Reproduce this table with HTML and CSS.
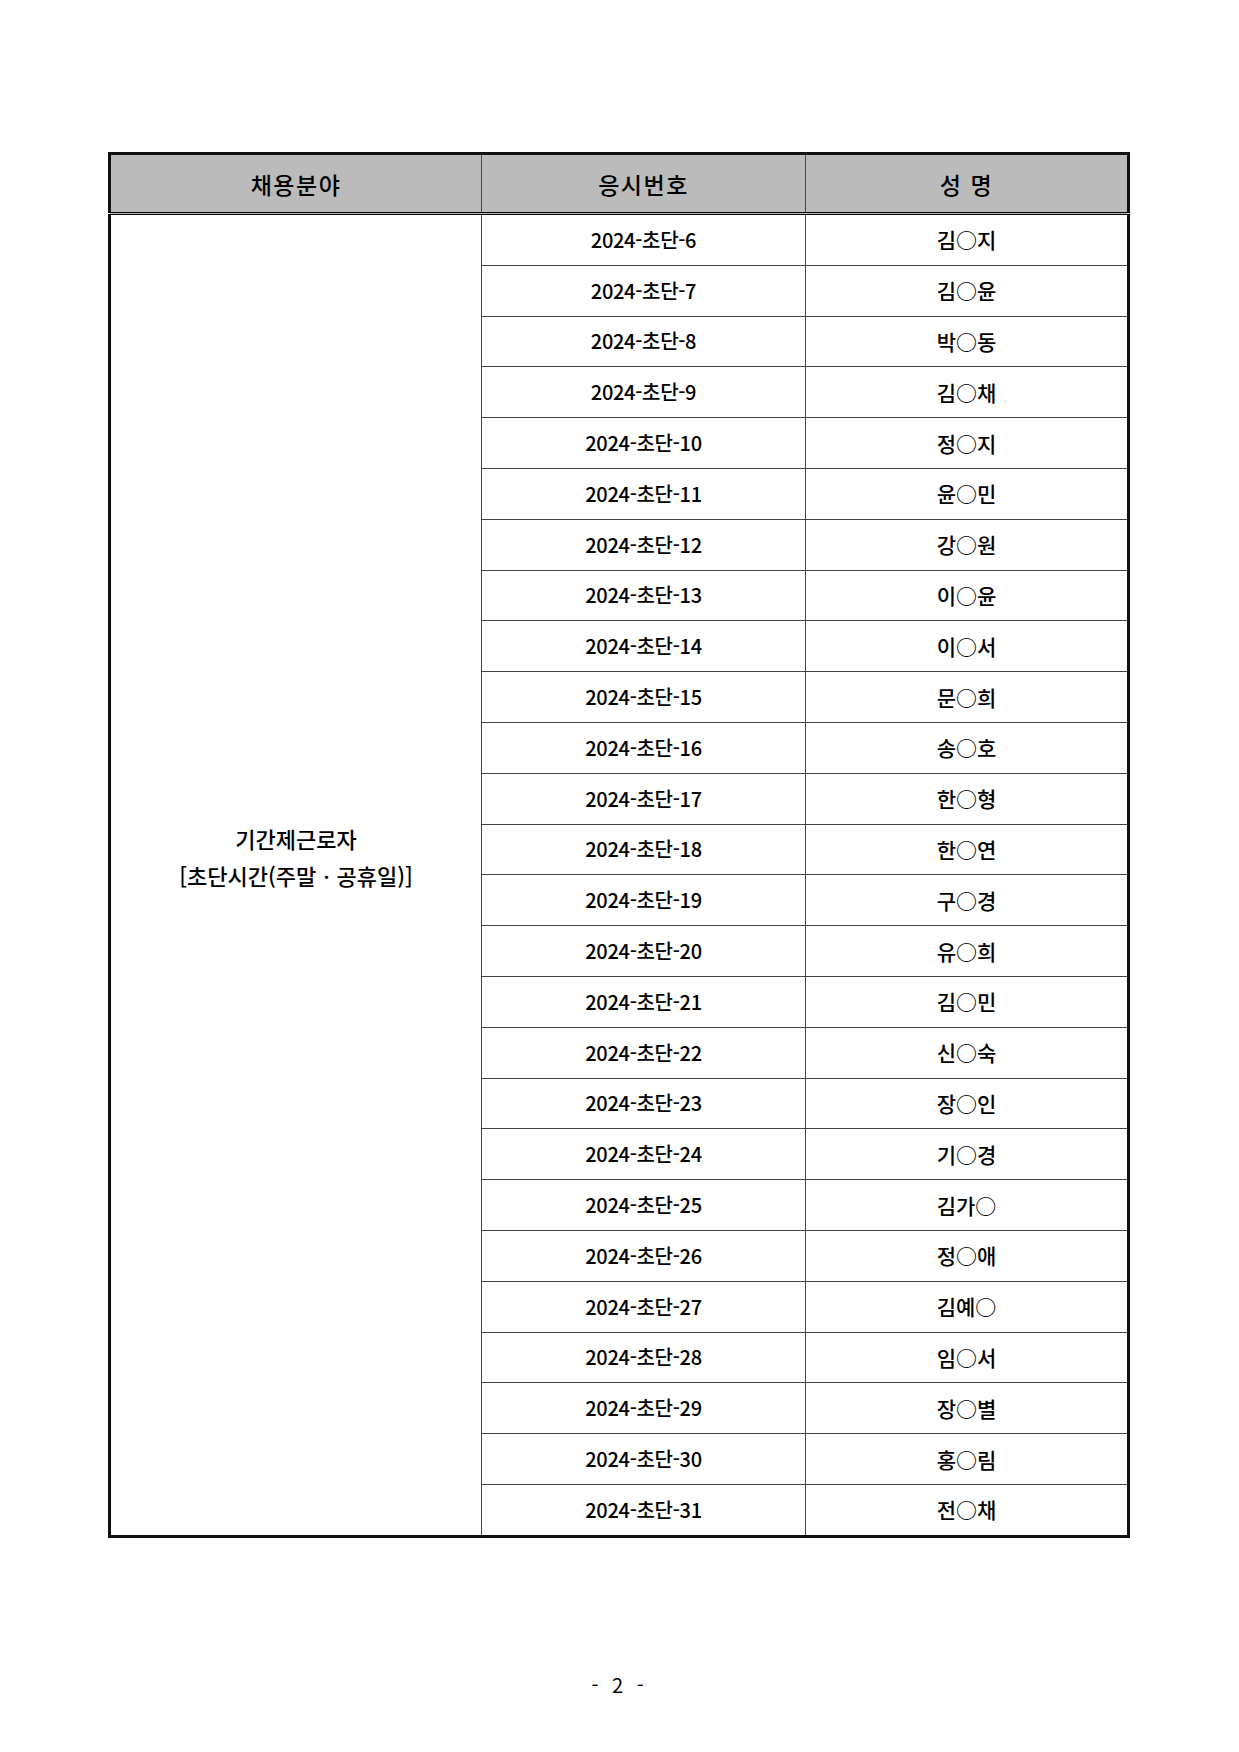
FILE: index.html
```html
<!DOCTYPE html>
<html lang="ko">
<head>
<meta charset="utf-8">
<title>합격자 명단</title>
<link rel="stylesheet" href="styles.css">
</head>
<body>
<div class="page">
<table class="roster">
  <colgroup>
    <col class="c1"><col class="c2"><col class="c3">
  </colgroup>
  <thead>
    <tr><th>채용분야</th><th>응시번호</th><th>성&nbsp;명</th></tr>
  </thead>
  <tbody>
    <tr><td class="field" rowspan="26"><div class="field-text">기간제근로자<br>[초단시간(주말ㆍ공휴일)]</div></td><td class="num">2024-초단-6</td><td>김○지</td></tr>
    <tr><td class="num">2024-초단-7</td><td>김○윤</td></tr>
    <tr><td class="num">2024-초단-8</td><td>박○동</td></tr>
    <tr><td class="num">2024-초단-9</td><td>김○채</td></tr>
    <tr><td class="num">2024-초단-10</td><td>정○지</td></tr>
    <tr><td class="num">2024-초단-11</td><td>윤○민</td></tr>
    <tr><td class="num">2024-초단-12</td><td>강○원</td></tr>
    <tr><td class="num">2024-초단-13</td><td>이○윤</td></tr>
    <tr><td class="num">2024-초단-14</td><td>이○서</td></tr>
    <tr><td class="num">2024-초단-15</td><td>문○희</td></tr>
    <tr><td class="num">2024-초단-16</td><td>송○호</td></tr>
    <tr><td class="num">2024-초단-17</td><td>한○형</td></tr>
    <tr><td class="num">2024-초단-18</td><td>한○연</td></tr>
    <tr><td class="num">2024-초단-19</td><td>구○경</td></tr>
    <tr><td class="num">2024-초단-20</td><td>유○희</td></tr>
    <tr><td class="num">2024-초단-21</td><td>김○민</td></tr>
    <tr><td class="num">2024-초단-22</td><td>신○숙</td></tr>
    <tr><td class="num">2024-초단-23</td><td>장○인</td></tr>
    <tr><td class="num">2024-초단-24</td><td>기○경</td></tr>
    <tr><td class="num">2024-초단-25</td><td>김가○</td></tr>
    <tr><td class="num">2024-초단-26</td><td>정○애</td></tr>
    <tr><td class="num">2024-초단-27</td><td>김예○</td></tr>
    <tr><td class="num">2024-초단-28</td><td>임○서</td></tr>
    <tr><td class="num">2024-초단-29</td><td>장○별</td></tr>
    <tr><td class="num">2024-초단-30</td><td>홍○림</td></tr>
    <tr><td class="num">2024-초단-31</td><td>전○채</td></tr>
  </tbody>
</table>
<div class="pagenum">- 2 -</div>
</div>
</body>
</html>
```

FILE: styles.css
```css
html, body {
  margin: 0;
  padding: 0;
  background: #fff;
}
body {
  font-family: "Noto Sans CJK KR", "Noto Sans", sans-serif;
  color: #000;
}
.page {
  width: 1239px;
  height: 1752px;
  padding-top: 152px;
  box-sizing: border-box;
}
.roster {
  margin-left: 108px;
  width: 1019px;
  border-collapse: collapse;
  table-layout: fixed;
  border: 3px solid #111;
}
.c1 { width: 372px; }
.c2 { width: 324px; }
.c3 { width: 323px; }
.roster th {
  background: #bbbbbb;
  height: 57px;
  padding: 0;
  font-size: 23px;
  font-weight: 500;
  letter-spacing: 1.5px;
  text-align: center;
  vertical-align: middle;
  border-left: 1px solid #444;
  border-right: 1px solid #444;
  border-bottom: 3px double #000;
}
.roster td {
  height: 49.8px;
  padding: 0;
  font-size: 21px;
  font-weight: 500;
  text-align: center;
  vertical-align: middle;
  border: 1px solid #444;
  line-height: 1;
}
.roster td.num {
  font-size: 20px;
  letter-spacing: -0.3px;
}
.roster td.field {
  vertical-align: middle;
}
.field-text {
  font-size: 22px;
  line-height: 37px;
  padding-bottom: 36px;
}
.pagenum {
  margin-top: 132px;
  text-align: center;
  font-size: 20px;
  letter-spacing: 4px;
}
```
